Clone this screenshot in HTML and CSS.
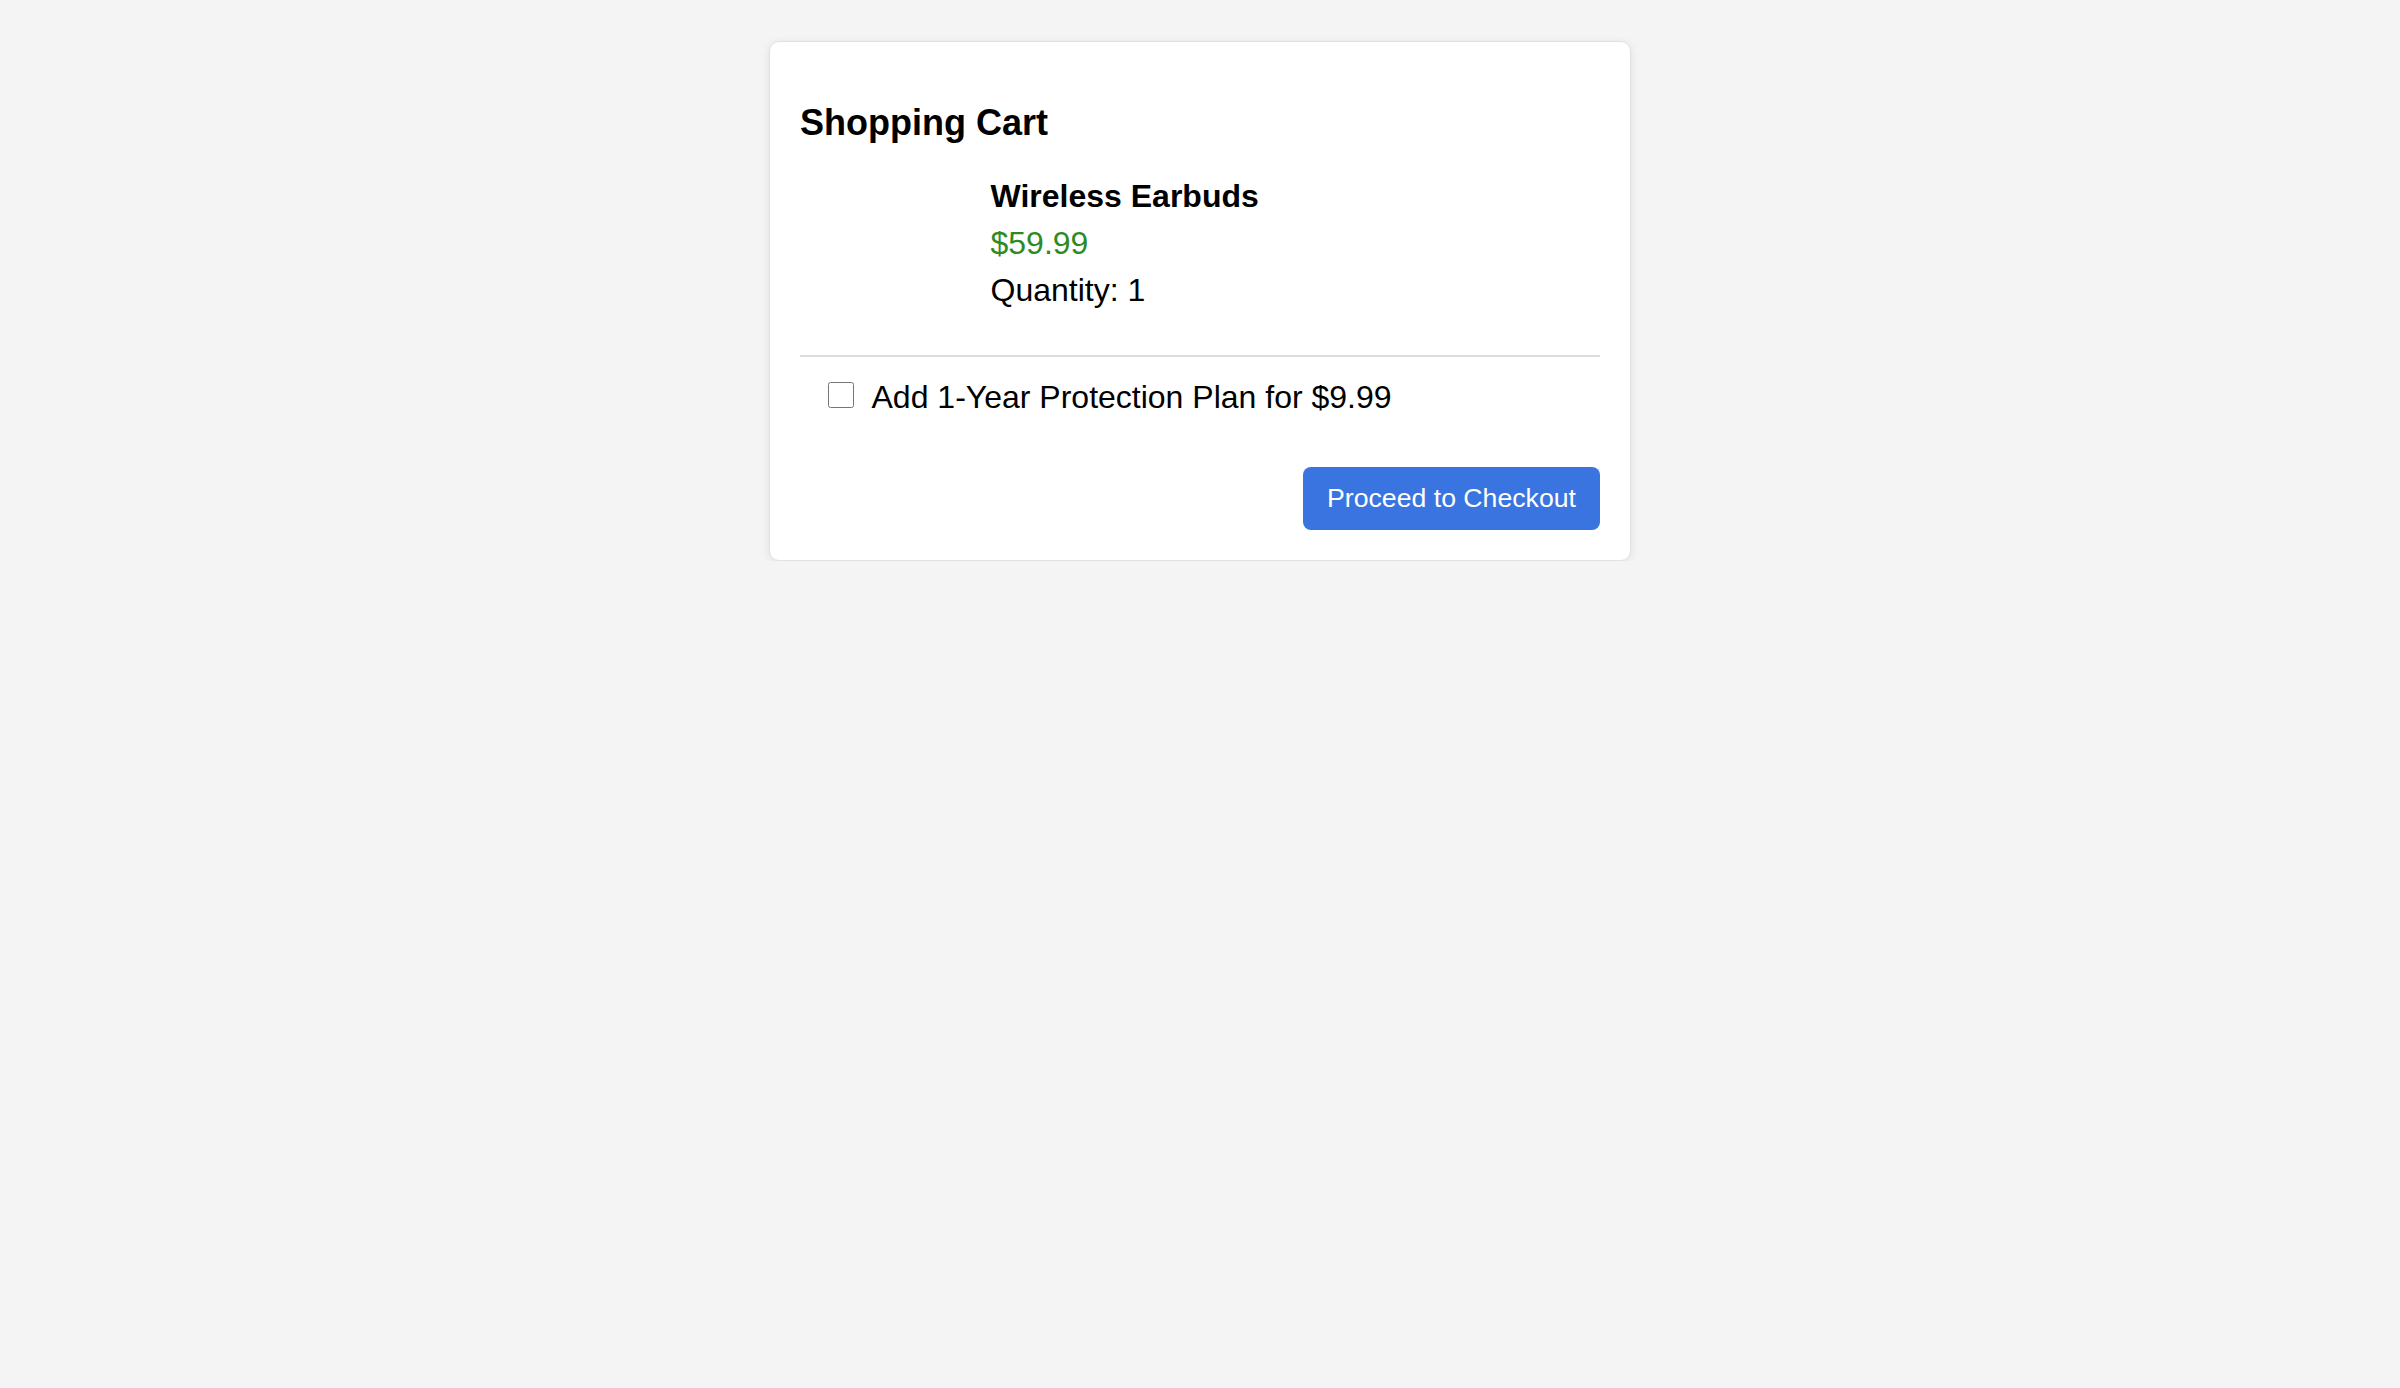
FILE: index.html
```html
<!DOCTYPE html>
<html lang="en">
<head>
<meta charset="utf-8">
<title>Shopping Cart</title>
<link rel="stylesheet" href="styles.css">
</head>
<body>
<div class="card">
  <h2 class="title">Shopping Cart</h2>
  <div class="item">
    <div class="thumb"></div>
    <div class="details">
      <p class="name">Wireless Earbuds</p>
      <p class="price">$59.99</p>
      <p class="qty">Quantity: 1</p>
    </div>
  </div>
  <div class="protection">
    <label class="plan"><input type="checkbox" class="check"><span>Add 1-Year Protection Plan for $9.99</span></label>
  </div>
  <div class="actions">
    <button class="checkout" type="button">Proceed to Checkout</button>
  </div>
</div>
</body>
</html>
```

FILE: styles.css
```css
html, body {
  margin: 0;
  padding: 0;
}
body {
  background: #f4f4f4;
  font-family: "Liberation Sans", Arial, Helvetica, sans-serif;
  color: #000;
  padding-top: 41px;
}
.card {
  width: 800px;
  margin: 0 auto;
  padding: 30px;
  background: #fff;
  border: 1px solid #e0e0e0;
  border-radius: 10px;
  box-shadow: 0 2px 10px rgba(0, 0, 0, 0.08);
}
.title {
  font-size: 36px;
  font-weight: bold;
  line-height: normal;
  margin: 30px 0 30px;
}
.item {
  display: flex;
  gap: 30.5px;
  padding: 3.5px 0 46.5px;
  border-bottom: 2px solid #dddddd;
}
.thumb {
  width: 160px;
  flex: none;
}
.details {
  display: flex;
  flex-direction: column;
  gap: 10px;
}
.details p {
  margin: 0;
  font-size: 32px;
  line-height: normal;
}
.name {
  font-weight: bold;
}
.price {
  color: #2e8b24;
}
.protection {
  padding: 22px 28px 21px;
}
.plan {
  display: flex;
  align-items: center;
  gap: 17.5px;
  font-size: 32px;
  line-height: normal;
}
.check {
  width: 26px;
  height: 26px;
  margin: -5px 0 0;
  flex: none;
}
.actions {
  display: flex;
  justify-content: flex-end;
  margin-top: 30px;
}
.checkout {
  font-family: "Liberation Sans", Arial, Helvetica, sans-serif;
  font-size: 26.67px;
  line-height: normal;
  color: #fff;
  background: #3a74e0;
  border: none;
  border-radius: 8px;
  padding: 16px 24px;
}
```
